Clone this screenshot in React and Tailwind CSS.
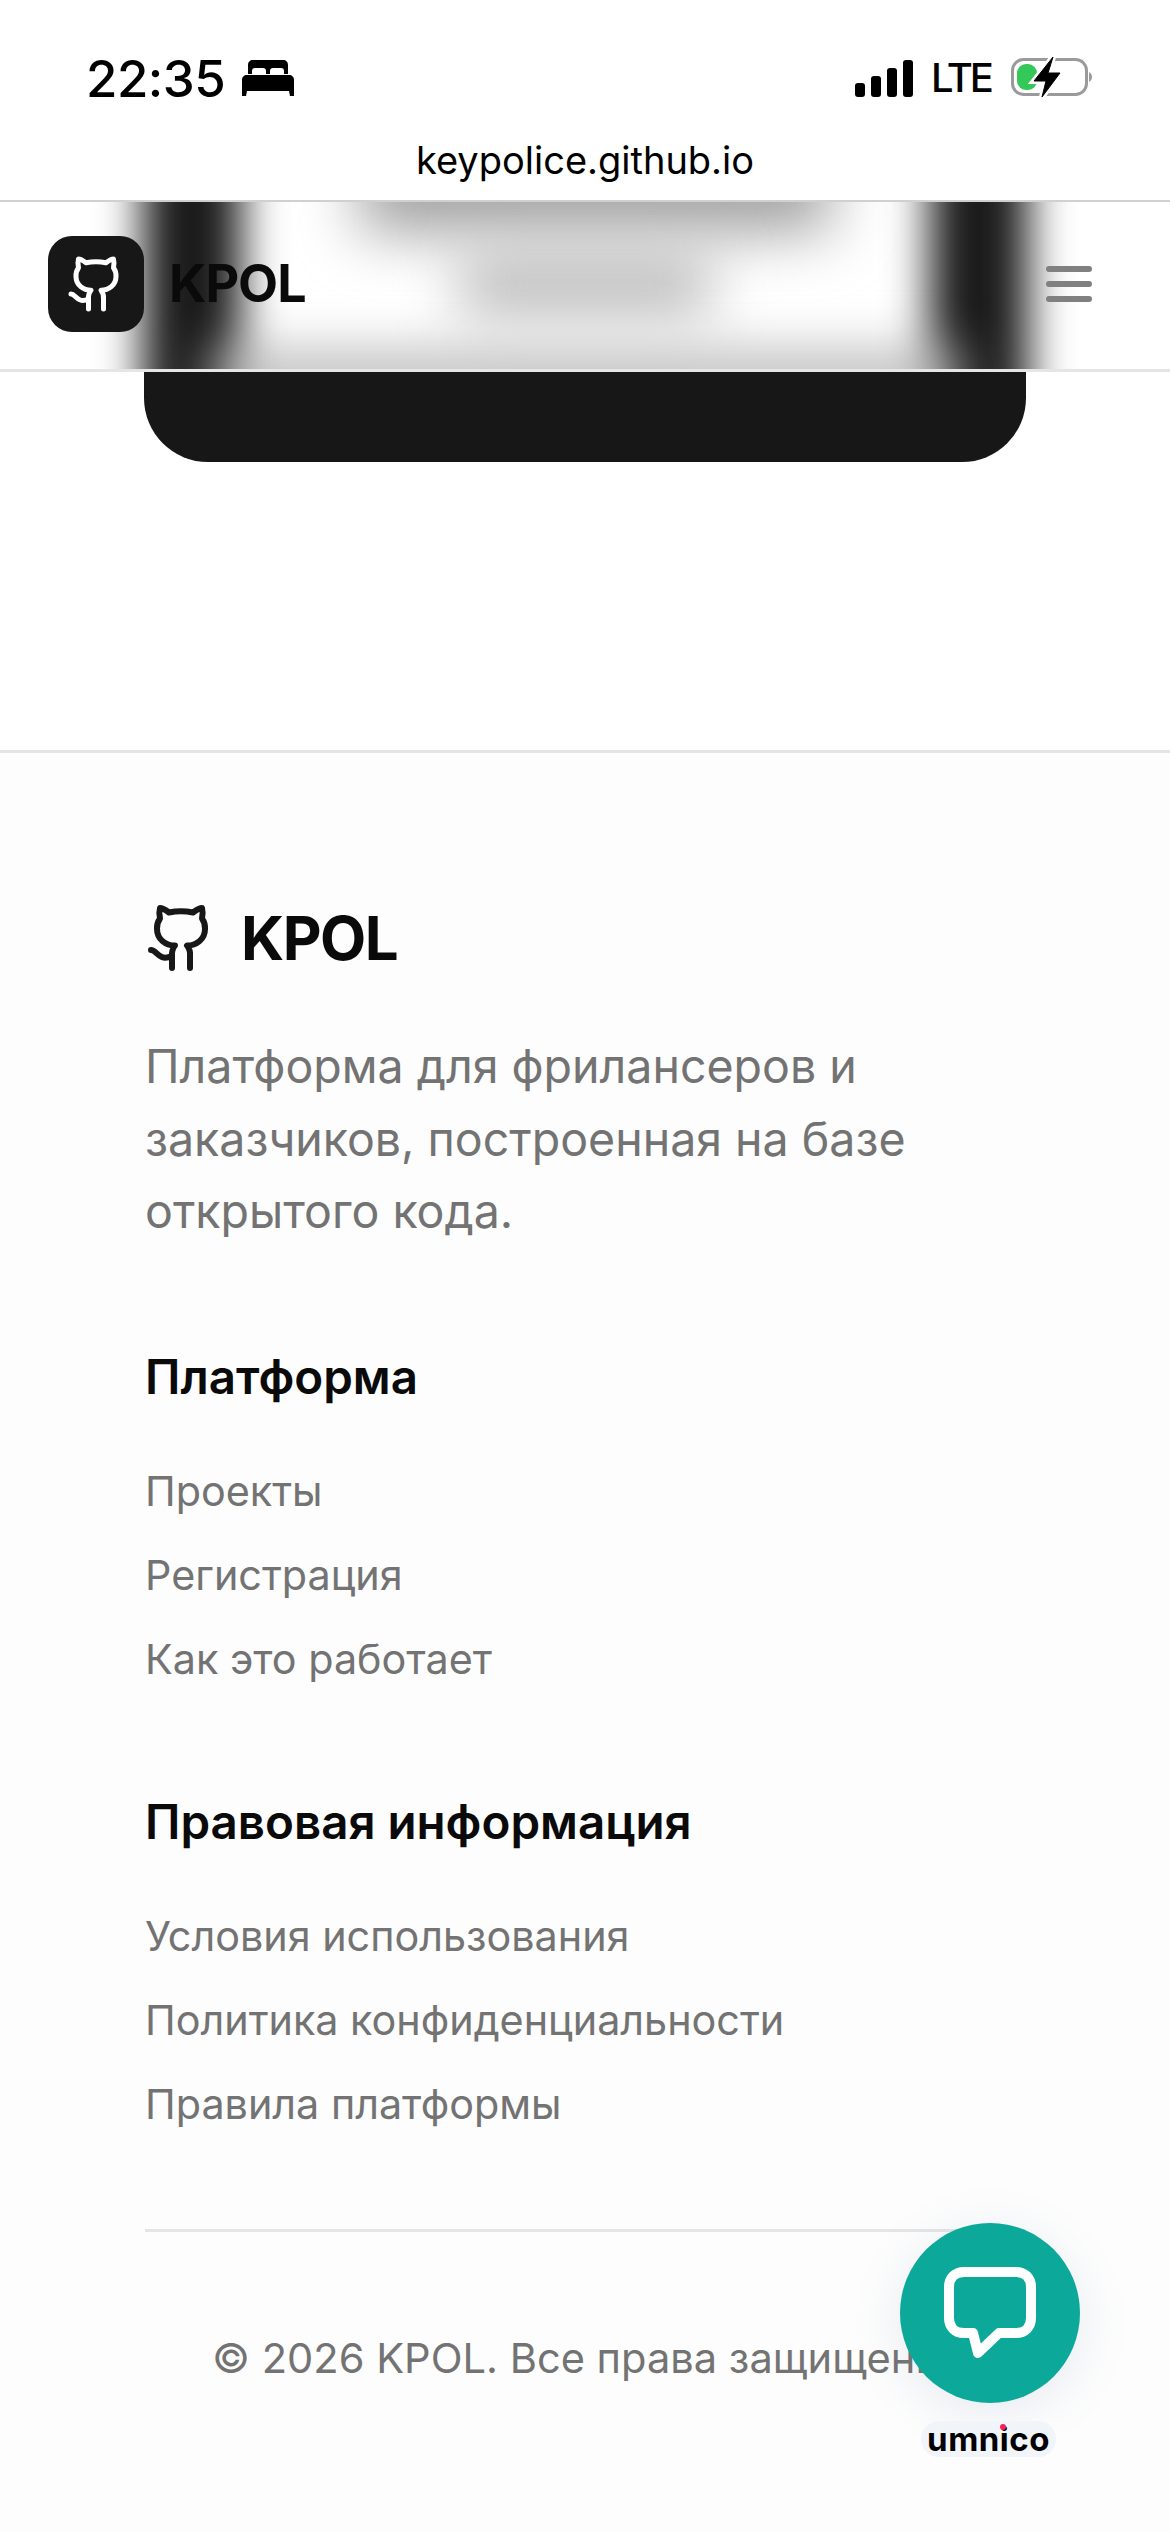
const font = { fontFamily: "Inter, 'Noto Sans', sans-serif" };

const GithubIcon = ({ className }) => (
  <svg viewBox="0 0 24 24" fill="none" stroke="currentColor" strokeWidth="2" strokeLinecap="round" strokeLinejoin="round" className={className}>
    <path d="M15 22v-4a4.8 4.8 0 0 0-1-3.5c3 0 6-2 6-5.5.08-1.25-.27-2.48-1-3.5.28-1.15.28-2.35 0-3.5 0 0-1 0-3 1.5-2.64-.5-5.36-.5-8 0C6 2 5 2 5 2c-.3 1.15-.3 2.35 0 3.5A5.403 5.403 0 0 0 4 9c0 3.5 3 5.5 6 5.5-.39.49-.68 1.05-.85 1.65-.17.6-.22 1.23-.15 1.85v4" />
    <path d="M9 18c-4.51 2-5-2-7-2" />
  </svg>
);

const StatusBar = () => (
  <div className="flex items-center justify-between h-[124px] pl-[86px] pr-[77px] pt-[32px]">
    <div className="flex items-center gap-[17px]">
      <span className="text-[51px] leading-none font-medium tracking-[-0.5px] text-black">22:35</span>
      <svg viewBox="0 0 52 36" className="w-[52px] h-[36px]" fill="black">
        <path d="M6 14V5c0-3 2-5 5-5h30c3 0 5 2 5 5v9h-4v-3c0-2-1-3-3-3h-8c-2 0-3 1-3 3v3h-4v-3c0-2-1-3-3-3h-8c-2 0-3 1-3 3v3z" />
        <path d="M5 15h42c3 0 5 2 5 5v16h-4l-1-5H5l-1 5H0V20c0-3 2-5 5-5z" />
      </svg>
    </div>
    <div className="flex items-center gap-[18px]">
      <div className="flex items-end gap-[6px] h-[37px]">
        <div className="w-[10px] h-[14px] rounded-[3px] bg-black" />
        <div className="w-[10px] h-[21px] rounded-[3px] bg-black" />
        <div className="w-[10px] h-[29px] rounded-[3px] bg-black" />
        <div className="w-[10px] h-[37px] rounded-[3px] bg-black" />
      </div>
      <span className="text-[40px] leading-none font-medium tracking-[-3px] text-black">LTE</span>
      <svg viewBox="0 0 84 42" className="w-[84px] h-[42px]">
        <rect x="3.5" y="2.5" width="74" height="35" rx="11" fill="none" stroke="#9a9a9a" strokeWidth="3" />
        <path d="M80 15c2 1 3 3 3 5s-1 4-3 5z" fill="#9a9a9a" />
        <rect x="8" y="7" width="20" height="26" rx="9" fill="#34c759" />
        <path d="M44 0 L25 24 H37 L33 40 L51 16 H39 Z" fill="white" stroke="white" strokeWidth="6" />
        <path d="M44 0 L25 24 H37 L33 40 L51 16 H39 Z" fill="black" stroke="black" strokeWidth="1" strokeLinejoin="round" />
      </svg>
    </div>
  </div>
);

const Header = () => (
  <header className="relative h-[170px] overflow-hidden bg-white border-b-[3px] border-[#e5e5e5]">
    <div className="absolute inset-0">
      <div className="absolute left-[143px] top-[-50px] w-[98px] h-[280px] bg-[#1a1a1a] blur-[22px]" />
      <div className="absolute left-[930px] top-[-50px] w-[98px] h-[280px] bg-[#1a1a1a] blur-[22px]" />
      <div className="absolute left-[360px] top-[-60px] w-[470px] h-[90px] bg-[#a0a0a0] blur-[30px]" />
      <div className="absolute left-[460px] top-[50px] w-[250px] h-[64px] bg-[#bdbdbd] blur-[28px]" />
      <div className="absolute left-[210px] top-[150px] w-[750px] h-[50px] bg-[#b8b8b8] blur-[26px]" />
    </div>
    <div className="relative flex items-center justify-between h-full pl-[48px] pr-[78px] pb-[3px]">
      <div className="flex items-center gap-[25px]">
        <div className="w-[96px] h-[96px] rounded-[24px] bg-[#171717] flex items-center justify-center text-white">
          <GithubIcon className="w-[60px] h-[60px]" />
        </div>
        <span className="text-[52px] font-bold tracking-[-1px] text-[#0a0a0a]">KPOL</span>
      </div>
      <svg viewBox="0 0 46 36" className="w-[46px] h-[36px]" fill="none" stroke="#808080" strokeWidth="6" strokeLinecap="round">
        <path d="M3 3h40M3 18h40M3 33h40" />
      </svg>
    </div>
  </header>
);

const FooterLinks = ({ title, links, className }) => (
  <div className={className}>
    <h3 className="text-[47.5px] leading-[72px] font-semibold text-[#0a0a0a]">{title}</h3>
    <ul className="mt-[47px] flex flex-col gap-[21px]">
      {links.map((link) => (
        <li key={link} className="text-[41.3px] leading-[63px] text-[#737373]">{link}</li>
      ))}
    </ul>
  </div>
);

export default function App() {
  return (
    <div style={font} className="relative w-[1170px] h-[2532px] overflow-hidden bg-white">
      <StatusBar />
      <div className="text-center text-[38px] leading-[52px] h-[78px] pt-[10px] text-black border-b-2 border-[#d0d0d0]">keypolice.github.io</div>
      <Header />
      <div className="ml-[144px] w-[882px] h-[90px] rounded-b-[64px] bg-[#171717]" />
      <footer className="mt-[288px] border-t-[3px] border-[#e5e5e5] bg-[#fdfdfd] px-[145px] pt-[149px] h-[1782px]">
        <div className="flex items-center gap-[24px]">
          <GithubIcon className="w-[72px] h-[72px] text-[#171717]" />
          <span className="text-[60px] leading-[72px] font-bold tracking-[-1.5px] text-[#0a0a0a]">KPOL</span>
        </div>
        <p className="mt-[56px] text-[46.5px] leading-[72.5px] text-[#737373] w-[800px]">Платформа для фрилансеров и заказчиков, построенная на базе открытого кода.</p>
        <FooterLinks className="mt-[93px]" title="Платформа" links={["Проекты", "Регистрация", "Как это работает"]} />
        <FooterLinks className="mt-[95px]" title="Правовая информация" links={["Условия использования", "Политика конфиденциальности", "Правила платформы"]} />
        <div className="mt-[93px] border-t-[3px] border-[#e5e5e5] pt-[95px] text-center text-[41.6px] leading-[63px] text-[#737373]">© 2026 KPOL. Все права защищены.</div>
      </footer>
      <div className="absolute left-[900px] top-[2223px] w-[180px] h-[180px] rounded-full bg-[#0ca99a] shadow-[0_10px_50px_rgba(100,130,170,0.15)] flex items-center justify-center">
        <svg viewBox="0 0 92 92" className="w-[92px] h-[92px]" fill="none" stroke="white" strokeWidth="10" strokeLinejoin="round">
          <path d="M20 5h52c9 0 15 6 15 15v31c0 9-6 15-15 15H55L34 86 29 66h-9C11 66 5 60 5 51V20C5 11 11 5 20 5z" />
        </svg>
      </div>
      <div className="absolute left-[921px] top-[2421px] w-[135px] h-[36px] rounded-full bg-[#f1f5f9] flex items-center justify-center">
        <span className="text-[33px] leading-none font-bold tracking-[0.5px] text-black">umnico</span>
        <div className="absolute left-[79px] top-[3px] w-[6px] h-[6px] rounded-full bg-[#f5225a]" />
      </div>
    </div>
  );
}
